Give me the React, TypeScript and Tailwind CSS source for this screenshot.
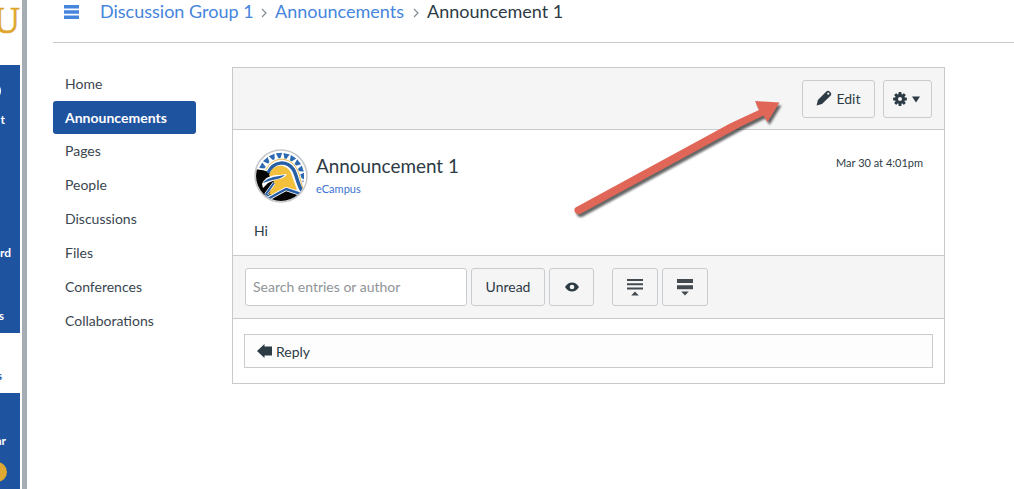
import type { ReactNode } from "react";

const GLOBAL_NAV = [
    { label: "t", top: "h-[62px]", right: "pr-[15px]" },
    { label: "rd", top: "h-[133px]", right: "pr-[9px]" },
    { label: "s", top: "h-[63px]", right: "pr-[16px]" },
];

const COURSE_NAV = [
    "Home",
    "Announcements",
    "Pages",
    "People",
    "Discussions",
    "Files",
    "Conferences",
    "Collaborations",
];

const NavLabel = ({ children, className }: { children: ReactNode; className: string }) => (
    <div className={`flex items-end justify-end text-[12px] leading-[14px] font-bold ${className}`}>
        {children}
    </div>
);

const GlobalNav = () => (
    <div className="flex w-[20px] shrink-0 flex-col overflow-hidden">
        <div className="flex h-[65px] justify-end bg-white font-['Liberation_Serif',serif] text-[37px] leading-[41px] text-[#dea62c] [-webkit-text-stroke:0.7px_#dea62c]">
            U
        </div>
        <div className="relative h-[268px] bg-[#1e539f] text-white">
            <div className="absolute top-[17px] -left-[17px] size-[18px] rounded-full border-2 border-white" />
            {GLOBAL_NAV.map((item, i) => (
                <NavLabel key={i} className={`${item.top} ${item.right}`}>{item.label}</NavLabel>
            ))}
        </div>
        <div className="h-[60px] bg-white text-[#1e539f]">
            <NavLabel className="h-[50px] pr-[18px]">s</NavLabel>
        </div>
        <div className="relative grow bg-[#1e539f] text-white">
            <NavLabel className="h-[55px] pr-[14px]">ar</NavLabel>
            <div className="absolute top-[69px] -left-[13px] size-[20px] rounded-full bg-[#e0a931]" />
        </div>
    </div>
);

const Chevron = () => (
    <svg width="6" height="10" viewBox="0 0 6 10" fill="none" stroke="#7d8790" strokeWidth="1.1">
        <path d="M1 1l4 4-4 4" />
    </svg>
);

const Breadcrumbs = () => (
    <div className="flex h-[43px] items-start border-b border-[#c7cacc] text-[18px] leading-[22px] text-[#4585dc]">
        <svg className="mt-[5px] ml-[11px]" width="15" height="14" viewBox="0 0 15 14" fill="#4585dc">
            <path d="M0 0h15v3.4H0zM0 5.3h15v3.4H0zM0 10.6h15V14H0z" />
        </svg>
        <div className="ml-[21px] w-[154px] whitespace-nowrap">Discussion Group 1</div>
        <div className="mt-[8px] ml-[7px]"><Chevron /></div>
        <div className="ml-[8px] w-[129px] whitespace-nowrap">Announcements</div>
        <div className="mt-[8px] ml-[9px]"><Chevron /></div>
        <div className="ml-[8px] whitespace-nowrap text-[#2d3b45]">Announcement 1</div>
    </div>
);

const CourseNav = () => (
    <nav className="mt-[24px] flex w-[143px] shrink-0 flex-col text-[14px] text-[#3a4650]">
        {COURSE_NAV.map((name) => (
            <div
                key={name}
                className={
                    name === "Announcements"
                        ? "flex h-[33px] items-center rounded-[3px] bg-[#1e539f] pl-[12px] font-bold text-white"
                        : "flex h-[34px] items-center pb-[2px] pl-[12px]"
                }
            >
                {name}
            </div>
        ))}
    </nav>
);

const Button = ({ children, className }: { children: ReactNode; className: string }) => (
    <button
        className={`flex h-[38px] items-center justify-center rounded-[3px] border border-[#c9cccf] bg-[#f5f5f5] text-[14px] text-[#2d3b45] ${className}`}
    >
        {children}
    </button>
);

const PencilIcon = () => (
    <svg width="16" height="16" viewBox="0 0 16 16" fill="#2d3b45">
        <path d="M.6 15.4l1.300-5.400 8.400-8.400c1-1 2.400-1 3.400 0l.8.8c1 1 1 2.400 0 3.400L6 14.100z" />
        <circle cx="12.300" cy="3.700" r="1.100" fill="#f5f5f5" />
    </svg>
);

const GearIcon = () => (
    <svg width="14" height="14" viewBox="-7 -7 14 14" fill="#2d3b45">
        {[0, 45, 90, 135].map((angle) => (
            <rect key={angle} x="-1.500" y="-6.900" width="3" height="13.800" rx=".6" transform={`rotate(${angle})`} />
        ))}
        <circle r="5" />
        <circle r="2" fill="#f5f5f5" />
    </svg>
);

const EyeIcon = () => (
    <svg width="14" height="10" viewBox="0 0 14 10">
        <path d="M0 5C2 1.800 4.300.4 7 .4S12 1.800 14 5c-2 3.200-4.300 4.600-7 4.600S2 8.200 0 5z" fill="#2d3b45" />
        <circle cx="7" cy="5" r="2.300" fill="#f5f5f5" />
    </svg>
);

const CollapseIcon = () => (
    <svg width="16" height="17" viewBox="0 0 16 17" fill="#444b50">
        <path d="M0 0h16v2H0zM0 4.300h16v2H0zM0 8.600h16v2H0zM4.200 16.500L8 12.500l3.800 4z" />
    </svg>
);

const ExpandIcon = () => (
    <svg width="16" height="17" viewBox="0 0 16 17" fill="#444b50">
        <path d="M0 0h16v4H0zM0 6.200h16v4H0zM4.200 12.500h7.600L8 16.500z" />
    </svg>
);

const CREST_ANGLES = [-62, -43, -24, -5, 14, 33, 52, 71, 90, 109];

// Spartan helmet in a round frame
const Avatar = () => (
    <svg width="54" height="54" viewBox="0 0 54 54" strokeLinejoin="round">
        <defs>
            <clipPath id="avatar"><circle cx="27" cy="27" r="25" /></clipPath>
        </defs>
        <circle cx="27" cy="27" r="26" fill="#fff" stroke="#c5c8cb" strokeWidth="1.500" />
        <g clipPath="url(#avatar)">
            <path d="M0 20l14 2 26 20 9 2-6 15H0z" fill="#050505" />
            {CREST_ANGLES.map((angle) => (
                <path key={angle} d="M-3.200-23h6.400L0-15.500z" fill="#2c69b0" transform={`translate(27 27) rotate(${angle})`} />
            ))}
            <path d="M12 22C18 9 33 9 40 18c5 7 5 14 9 24" fill="none" stroke="#fff" strokeWidth="5" />
            <path d="M12 21C18 8 33 7 41 17c5 7 5 14 8 23" fill="none" stroke="#e7b547" strokeWidth="1" />
            <path d="M14 24C20 11 33 12 39 20c4 6 4 14 9 22" fill="none" stroke="#285fa5" strokeWidth="3.500" />
            <path d="M15 26c4-12 17-12 22-2l6 17-12-1-11 7-5-2 5-12z" fill="#f3c03e" />
            <path d="M8 35c3-7 9-9 17-9l8-1c-3 5-8 5-12 6l-7 3-5 5z" fill="#fff" />
            <path d="M9 34c4-5 9-6 22-8-4 4-9 4-16 6z" fill="#285fa5" />
            <path d="M20 34l-8 11 4 3" fill="none" stroke="#fff" strokeWidth="3" />
            <path d="M20 34l-8 11 4 3" fill="none" stroke="#285fa5" strokeWidth="2" />
            <path d="M14 50l7-4 11-6 15 5" fill="none" stroke="#fff" strokeWidth="4" />
            <path d="M14 50l7-4 11-6 15 5" fill="none" stroke="#285fa5" strokeWidth="2.400" />
        </g>
    </svg>
);

const Discussion = () => (
    <div className="mt-[24px] ml-[36px] h-[317px] w-[713px] border border-[#c7cacc] bg-white">
        <div className="flex h-[62px] justify-end border-b border-[#c7cacc] bg-[#f5f5f5] pt-[12px] pr-[12px]">
            <Button className="w-[73px] gap-[4px] pb-[2px]">
                <PencilIcon />
                Edit
            </Button>
            <Button className="ml-[8px] w-[49px] gap-[5px] pr-[2px]">
                <GearIcon />
                <svg width="8" height="7" viewBox="0 0 8 7" fill="#2d3b45"><path d="M0 .5h8L4 6.500z" /></svg>
            </Button>
        </div>
        <div className="h-[126px] border-b border-[#c7cacc] pl-[21px] text-[#2d3b45]">
            <div className="flex h-[91px] pt-[19px]">
                <Avatar />
                <div className="ml-[8px] grow pt-[4px]">
                    <div className="text-[18.900px] leading-[26px]">Announcement 1</div>
                    <div className="mt-[1px] text-[11px] leading-[18px] text-[#3b73d1]">eCampus</div>
                </div>
                <div className="mt-[5px] mr-[21px] text-[11px] leading-[18px]">Mar 30 at 4:01pm</div>
            </div>
            <div className="text-[14px] leading-[20px]">Hi</div>
        </div>
        <div className="flex h-[63px] items-start border-b border-[#c7cacc] bg-[#f5f5f5] pt-[12px] pl-[12px]">
            <input
                className="h-[38px] w-[222px] rounded-[3px] border border-[#c9cccf] bg-white px-[7px] pb-[2px] text-[14px] placeholder:text-[#909497]"
                placeholder="Search entries or author"
            />
            <Button className="ml-[4px] w-[74px] pb-[2px]">Unread</Button>
            <Button className="ml-[4px] w-[45px]"><EyeIcon /></Button>
            <Button className="ml-[18px] w-[46px]"><CollapseIcon /></Button>
            <Button className="ml-[4px] w-[46px]"><ExpandIcon /></Button>
        </div>
        <div className="px-[11px] pt-[15px]">
            <div className="flex h-[34px] items-center gap-[4px] border border-[#c9cccf] bg-[#fdfdfd] pl-[12px] text-[14px] text-[#2d3b45]">
                <svg width="15" height="14" viewBox="0 0 15 14" fill="#2d3b45"><path d="M0 7l7.500-7v2.500H15v9H7.500V14z" /></svg>
                Reply
            </div>
        </div>
    </div>
);

// Red pointer drawn over the page, aimed at the Edit button
const PointerArrow = () => (
    <svg
        className="absolute top-[90px] left-[560px] drop-shadow-[2px_3px_1px_rgba(0,0,0,0.6)]"
        width="240"
        height="135"
        viewBox="0 0 240 135"
        fill="#e06658"
    >
        <path d="M15.500 117.500L170 33.500 199 20l-4-9 24.500 1.500L207.500 32l-4-6.500L181 36.500 21 123.500c-4 2.500-9-3-5.500-6z" />
    </svg>
);

export default function App() {
    return (
        <div className="relative flex h-[489px] w-[1014px] overflow-hidden bg-white font-[Lato,sans-serif]">
            <GlobalNav />
            <div className="ml-[2px] w-[5px] shrink-0 bg-[#a5adb2]" />
            <main className="ml-[26px] grow">
                <Breadcrumbs />
                <div className="flex">
                    <CourseNav />
                    <Discussion />
                </div>
            </main>
            <PointerArrow />
        </div>
    );
}
